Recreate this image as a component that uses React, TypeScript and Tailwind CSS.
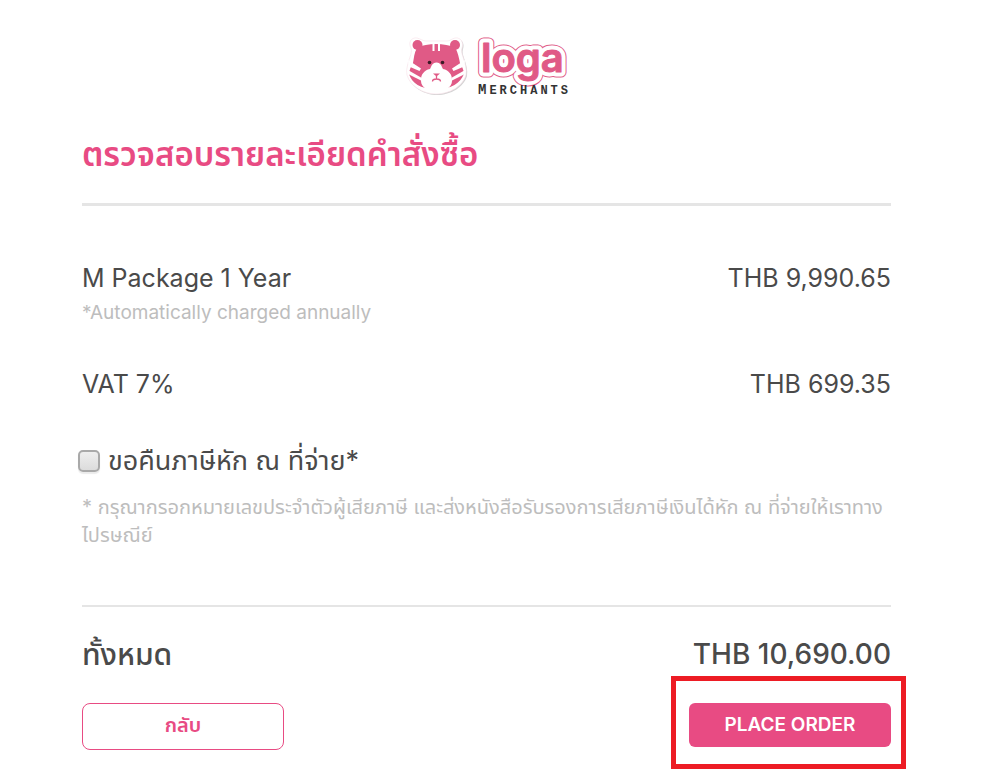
import React from "react";

interface OrderLineProps {
  label: string;
  amount: string;
  note?: string;
}

// Tiger mascot with the product name next to it
const Logo: React.FC = () => (
  <svg
    width="176"
    height="84"
    viewBox="-5 -10 176 84"
    role="img"
    aria-label="loga Merchants"
  >
    {/* sticker edge and shadow */}
    <path
      d="M13 2C7 1 4 7 7 12C8 15 7 18 6 21C4 27 2 33 3 39C6 50 19 58 32 58C46 58 59 50 62 39C63 33 61 27 59 21C58 18 57 15 58 12C60 7 57 1 51 2C47 3 46 5 43 5H22C19 5 17 3 13 2Z"
      transform="translate(1 1)"
      fill="#d4d4d4"
    />
    <path
      d="M13 2C7 1 4 7 7 12C8 15 7 18 6 21C4 27 2 33 3 39C6 50 19 58 32 58C46 58 59 50 62 39C63 33 61 27 59 21C58 18 57 15 58 12C60 7 57 1 51 2C47 3 46 5 43 5H22C19 5 17 3 13 2Z"
      fill="#fff"
      stroke="#f7dfe8"
      strokeWidth="0.6"
    />
    {/* head */}
    <circle cx="13.500" cy="9" r="5" fill="#e05a86" />
    <circle cx="51" cy="9" r="5" fill="#e05a86" />
    <path
      d="M13 12C18 9 25 8 32 8S46 9 51.500 12C54 17 55 22 56 27C58 31 60 34 60 38C56 47 48 53 32 53S8 47 5 38C5 34 7 31 9 27C10 22 10 17 13 12Z"
      fill="#e05a86"
    />
    {/* stripes */}
    <path
      d="M29.500 7V15M35 7V15"
      stroke="#fff"
      strokeWidth="2"
      fill="none"
    />
    <path
      d="M4 24L17 32.500L15.500 35L5 30.500ZM3 33.500L17 41.500V44.500L4 38ZM61 24L48 32.500L49.500 35L60 30.500ZM62 33.500L48 41.500V44.500L61 38Z"
      fill="#fff"
    />
    {/* muzzle */}
    <path
      d="M32.500 26.500C28 26.500 27.500 30.500 26 33C20 34 16.500 39 17 45C17 51 24 56 32.500 56S48 51 48 45C48.500 39 45 34 39 33C37.500 30.500 37 26.500 32.500 26.500Z"
      fill="#fff"
    />
    <path d="M29 37.500H36L32.500 40.500Z" fill="#e05a86" />
    <path
      d="M32.500 40V43M28.500 45.500C28.500 43.500 30 43 32.500 43S36.500 43.500 36.500 45.500"
      stroke="#e05a86"
      strokeWidth="1.3"
      fill="none"
    />
    <circle cx="25.500" cy="26.500" r="1.800" fill="#3b1a26" />
    <circle cx="38.500" cy="26.500" r="1.800" fill="#3b1a26" />
    {/* wordmark */}
    <g
      className="font-['Inter',sans-serif] text-[40px] font-semibold"
      strokeLinejoin="round"
    >
      <text x="77" y="36" fill="#e05a86" stroke="#e05a86" strokeWidth="11">
        loga
      </text>
      <text x="77" y="36" fill="#fff" stroke="#fff" strokeWidth="9">
        loga
      </text>
      <text x="77" y="36" fill="#e05a86" stroke="#e05a86" strokeWidth="1">
        loga
      </text>
    </g>
    <text
      x="74"
      y="58"
      fill="#333"
      className="font-['Liberation_Mono',monospace] text-[14px] font-bold tracking-[3px]"
    >
      M<tspan className="text-[12px]">ERCHANTS</tspan>
    </text>
  </svg>
);

const OrderLine: React.FC<OrderLineProps> = ({ label, amount, note }) => (
  <div className="flex justify-between text-[25px] leading-9">
    <div>
      <div>{label}</div>
      {note && (
        <p className="text-[19px] leading-[34px] text-[#bdbdbd]">{note}</p>
      )}
    </div>
    <div>{amount}</div>
  </div>
);

export default function App() {
  return (
    <main className="bg-white pt-[26px] pr-[94px] pb-2 pl-[82px] font-['Inter','Noto_Sans_Thai',sans-serif] text-[#4a4a4a]">
      <header className="flex justify-center">
        <Logo />
      </header>

      <h1 className="mt-[22px] border-b-3 border-[#e5e5e5] pb-[27px] text-[33px] leading-11 font-semibold text-[#e84b83]">
        ตรวจสอบรายละเอียดคำสั่งซื้อ
      </h1>

      <section className="mt-[54px] flex flex-col gap-9">
        <OrderLine
          label="M Package 1 Year"
          amount="THB 9,990.65"
          note="*Automatically charged annually"
        />
        <OrderLine label="VAT 7%" amount="THB 699.35" />
      </section>

      {/* Withholding tax */}
      <section className="mt-[39px] border-b-2 border-[#e5e5e5] pb-14">
        <div className="-ml-1 flex items-center gap-2">
          <input
            id="withholding-tax"
            type="checkbox"
            className="size-[22px] shrink-0 appearance-none rounded-[5px] border-2 border-[#a9a9a9] bg-linear-to-b from-[#eeeeee] to-[#dcdcdc] shadow-[0_2px_1px_#ebebeb] checked:bg-[#e84b83]"
          />
          <label htmlFor="withholding-tax" className="text-[27px] leading-10">
            ขอคืนภาษีหัก ณ ที่จ่าย*
          </label>
        </div>
        <p className="mt-3 text-[20px] leading-7 text-[#bdbdbd]">
          * กรุณากรอกหมายเลขประจำตัวผู้เสียภาษี และส่งหนังสือรับรองการเสียภาษีเงินได้หัก ณ ที่จ่ายให้เราทางไปรษณีย์
        </p>
      </section>

      <div className="mt-[26px] flex justify-between text-[28px] leading-[43px] font-medium">
        <span className="text-[30px]">ทั้งหมด</span>
        <span>THB 10,690.00</span>
      </div>

      <div className="-mr-[15px] flex items-start justify-between">
        <button
          type="button"
          className="mt-[27px] h-[47px] w-[202px] rounded-lg border border-[#e84b83] pb-1 text-[20px] font-semibold text-[#e84b83]"
        >
          กลับ
        </button>
        <div className="border-5 border-[#ed1c24] pt-[22px] pr-[10px] pb-[17px] pl-[13px]">
          <button
            type="button"
            className="block h-11 w-[202px] rounded-md bg-[#e84b83] text-[19px] font-semibold text-white"
          >
            PLACE ORDER
          </button>
        </div>
      </div>
    </main>
  );
}
